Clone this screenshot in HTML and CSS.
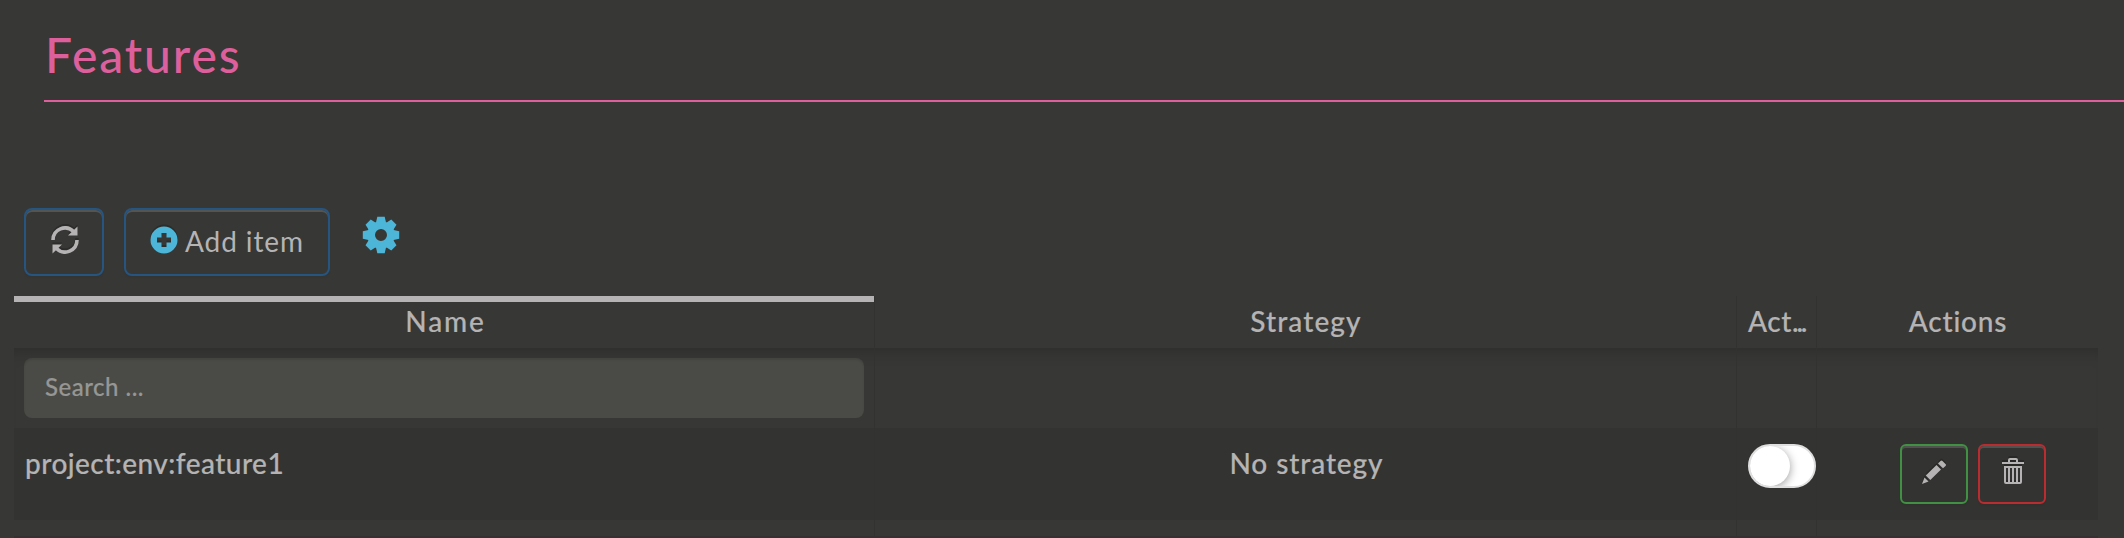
FILE: index.html
```
<!DOCTYPE html>
<html lang="en">
<head>
<meta charset="utf-8">
<title>Features</title>
<link rel="stylesheet" href="styles.css">
</head>
<body>
<header class="page-header"><h1 class="title">Features</h1></header>
<div class="toolbar">
  <button class="btn btn-primary btn-refresh" aria-label="Refresh">
    <svg width="28" height="28" viewBox="0 0 28 28"><path d="M2 14A12 12 0 0 1 22.500 5.500M26 14A12 12 0 0 1 5.500 22.500" fill="none" stroke="currentColor" stroke-width="3.600"/><path d="M26.500 .5V9.500H17zM1.500 27.500V18.500H11z" fill="currentColor"/></svg>
  </button>
  <button class="btn btn-primary btn-add">
    <svg class="cyan" width="28" height="28" viewBox="0 0 28 28"><path fill="currentColor" fill-rule="evenodd" d="M14 .5a13.500 13.500 0 1 0 0 27a13.500 13.500 0 1 0 0-27M11.500 7h5v4.500H21v5h-4.500V21h-5v-4.500H7v-5h4.500z"/></svg>
    <span class="add-label">Add item</span>
  </button>
  <svg class="cyan gear" width="38" height="38" viewBox="-19 -19 38 38"><g fill="currentColor"><path fill-rule="evenodd" d="M0-13.800a13.800 13.800 0 1 0 0 27.600a13.800 13.800 0 1 0 0-27.600M0-6a6 6 0 1 1 0 12a6 6 0 1 1 0-12"/><path id="tooth" d="M-5-12.500L-3.700-18.200H3.700L5-12.500z"/><use href="#tooth" transform="rotate(45)"/><use href="#tooth" transform="rotate(90)"/><use href="#tooth" transform="rotate(135)"/><use href="#tooth" transform="rotate(180)"/><use href="#tooth" transform="rotate(225)"/><use href="#tooth" transform="rotate(270)"/><use href="#tooth" transform="rotate(315)"/></g></svg>
</div>
<main class="table">
  <div class="row head">
    <div class="cell sorted"><span class="t-name">Name</span></div>
    <div class="cell"><span class="t-strategy">Strategy</span></div>
    <div class="cell t-act">Act<span class="dots">...</span></div>
    <div class="cell"><span class="t-actions">Actions</span></div>
  </div>
  <div class="row filters">
    <div class="cell"><div class="search">Search ...</div></div>
    <div class="cell"></div><div class="cell"></div><div class="cell"></div>
  </div>
  <div class="row data">
    <div class="cell t-project">project:env:feature1</div>
    <div class="cell center"><span class="t-none">No strategy</span></div>
    <div class="cell toggle-cell"><div class="toggle"><div class="knob"></div></div></div>
    <div class="cell actions">
      <button class="btn btn-small btn-edit" aria-label="Edit"><svg width="26" height="26" viewBox="0 0 26 26"><path fill="currentColor" d="M1 25L3.500 18.500L7.500 22.500zM4.800 16.500L15.500 6L20 10.500L9.300 21zM17 4.500L19.500 2Q20.500 1 21.500 2L24.500 5Q25.500 6 24.500 7L22 9.300z"/></svg></button>
      <button class="btn btn-small btn-delete" aria-label="Delete"><svg width="22" height="26" viewBox="0 0 22 26"><path fill="currentColor" fill-rule="evenodd" d="M0 4H6V2Q6 0 8 0H14Q16 0 16 2V4H22V6H0zM8 2V4H14V2zM2 8H20V24Q20 26 18 26H4Q2 26 2 24zM4 10V24H6V10zM8 10V24H10V10zM12 10V24H14V10zM16 10V24H18V10z"/></svg></button>
    </div>
  </div>
  <div class="row rest"><div class="cell"></div><div class="cell"></div><div class="cell"></div><div class="cell"></div></div>
</main>
</body>
</html>
```
FILE: styles.css
```
* { box-sizing: border-box; }
body {
  margin: 0;
  height: 538px;
  overflow: hidden;
  display: flex;
  flex-direction: column;
  background: #373735;
  color: #b5b3b3;
  font: 500 28px/40px Lato, "Open Sans", sans-serif;
  font-variant-ligatures: none;
  -webkit-text-stroke: .2px currentColor;
}
.page-header { height: 102px; margin-left: 44px; border-bottom: 2px solid #dd5f9b; }
.title { margin: 0; padding: 25px 0 0 1px; color: #dd5f9b; font-size: 48px; font-weight: 500; line-height: 60px; letter-spacing: 1.9px; -webkit-text-stroke: 0; }
.toolbar { display: flex; align-items: flex-start; height: 194px; padding: 106px 0 0 24px; }
.btn {
  display: flex;
  align-items: center;
  justify-content: center;
  padding: 0;
  background: transparent;
  border: 2px solid;
  border-radius: 8px;
  color: #b5b3b3;
  font: inherit;
  box-shadow: inset 0 2px 0 rgba(255,255,255,.15), 0 2px 2px rgba(0,0,0,.05);
}
.btn svg { filter: drop-shadow(0 -2px 0 rgba(0,0,0,.2)); }
.btn-primary { height: 68px; border-color: #265581; }
.btn-refresh { width: 80px; margin-right: 20px; padding: 0 0 4px 1px; }
.btn-add { width: 206px; gap: 7px; font-weight: 400; letter-spacing: .9px; -webkit-text-stroke: 0; }
.btn-add svg { margin-bottom: 4px; }
.add-label { padding-bottom: 2px; }
.cyan { color: #4db6d8; }
.gear { margin: 8px 0 0 32px; }
.table { width: 2084px; margin-left: 14px; }
.row { display: grid; grid-template-columns: 861px 862px 80px 281px; }
.cell { border-right: 1px solid #323230; min-width: 0; }
.cell:last-child { border-right: 0; }
.head { height: 52px; text-align: center; }
.head .cell { padding-top: 5px; }
.sorted { background: linear-gradient(#b5b3b3, #b5b3b3) 0 0 / 100% 6px no-repeat; }
.t-name { margin-left: 3px; letter-spacing: 1.9px; }
.t-strategy { margin-left: 1px; letter-spacing: 1.1px; }
.head .t-act { padding-left: 11px; text-align: left; letter-spacing: .6px; }
.dots { letter-spacing: -2.2px; }
.t-actions { margin-left: 1px; letter-spacing: .8px; }
.filters { height: 80px; box-shadow: inset 0 16px 16px -14px rgba(0,0,0,.22); }
.filters .cell:first-child { padding: 10px 10px 0 10px; }
.search { height: 60px; padding: 9px 21px; border-radius: 8px; background: #4a4a47; box-shadow: inset 0 2px 2px rgba(0,0,0,.1); color: #969695; font-size: 24px; letter-spacing: .5px; }
.data { height: 92px; background: #333331; }
.data .cell { padding-top: 15px; }
.data .t-project { padding-left: 11px; letter-spacing: .45px; }
.center { text-align: center; }
.t-none { margin-left: 2px; letter-spacing: .9px; }
.data .toggle-cell { padding: 16px 0 0 11px; overflow: hidden; }
.toggle { width: 68px; height: 44px; border: 2px solid #dfdfdf; border-radius: 22px; background: #fff; overflow: hidden; }
.knob { width: 40px; height: 40px; border-radius: 50%; background: #fff; box-shadow: 0 2px 10px rgba(0,0,0,.4); }
.data .actions { display: flex; gap: 10px; padding: 16px 0 0 83px; }
.btn-small { width: 68px; height: 60px; border-radius: 6px; }
.btn-edit { border-color: #409144; padding-bottom: 4px; }
.btn-delete { border-color: #bb2c30; padding: 0 0 6px 2px; }
.rest { height: 18px; border-bottom: 2px solid #343133; }
```
